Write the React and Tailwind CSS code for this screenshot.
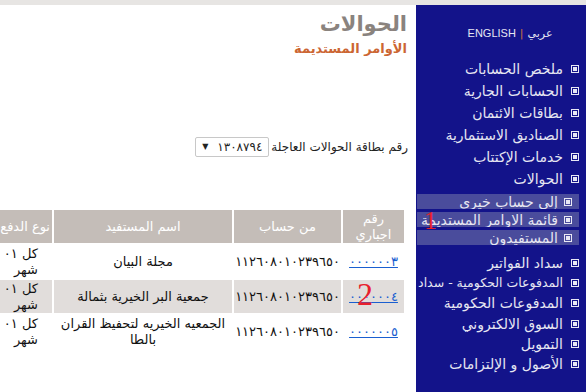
const menuTop = [
  'ملخص الحسابات',
  'الحسابات الجارية',
  'بطاقات الائتمان',
  'الصناديق الاستثمارية',
  'خدمات الإكتتاب',
  'الحوالات',
];

const subMenu = ['إلى حساب خيري', 'قائمة الاوامر المستديمة', 'المستفيدون'];

const menuBottom = [
  { label: 'سداد الفواتير' },
  { label: 'المدفوعات الحكومية - سداد', small: true },
  { label: 'المدفوعات الحكومية' },
  { label: 'السوق الالكتروني' },
  { label: 'التمويل' },
  { label: 'الأصول و الإلتزامات' },
];

const rows = [
  { id: '٠٠٠٠٠٠٣', account: '١١٢٦٠٨٠١٠٢٣٩٦٥٠', name: ['مجلة البيان'], shaded: false },
  { id: '٠٠٠٠٠٠٤', account: '١١٢٦٠٨٠١٠٢٣٩٦٥٠', name: ['جمعية البر الخيرية بثمالة'], shaded: true },
  { id: '٠٠٠٠٠٠٥', account: '١١٢٦٠٨٠١٠٢٣٩٦٥٠', name: ['الجمعيه الخيريه لتحفيظ القران', 'بالطا'], shaded: false },
];

const Bullet = () => (
  <span className="w-[8px] h-[8px] border border-[#e8e8f4] flex items-center justify-center shrink-0">
    <span className="w-[4px] h-[4px] bg-[#e8e8f4]"></span>
  </span>
);

const Sidebar = () => (
  <aside className="w-[170px] shrink-0 bg-[#13138a] text-[#e6e6f2] text-[14px] leading-none">
    <div className="h-[23px]"></div>
    <div className="flex items-center justify-center gap-[4px] text-[11px] pl-[18px]">
      <span>عربي</span>
      <span className="text-[#d0703a]">|</span>
      <span dir="ltr" className="font-['Liberation_Sans']">ENGLISH</span>
    </div>
    <div className="h-[19px]"></div>
    {menuTop.map((item) => (
      <div key={item} className="h-[22px] flex items-center gap-[8px] pr-[7px]">
        <Bullet />
        <span>{item}</span>
      </div>
    ))}
    <div className="h-[4px]"></div>
    <div className="flex flex-col gap-[3px] ml-[1px] mr-[7px]">
      {subMenu.map((item) => (
        <div key={item} className="h-[15px] bg-[#4a4c9c] flex items-center gap-[6px] pr-[7px] whitespace-nowrap overflow-hidden">
          <Bullet />
          <span>{item}</span>
        </div>
      ))}
    </div>
    <div className="h-[8px]"></div>
    {menuBottom.map((item) => (
      <div key={item.label} className="h-[20.2px] flex items-center gap-[8px] pr-[7px] whitespace-nowrap">
        <Bullet />
        <span className={item.small ? 'text-[12.5px]' : ''}>{item.label}</span>
      </div>
    ))}
  </aside>
);

const Content = () => (
  <main className="flex-1 relative overflow-hidden bg-white">
    <div className="pr-[9px] pt-[4px]">
      <h1 className="text-[21px] leading-[31px] font-bold text-[#8a837e]">الحوالات</h1>
      <h2 className="text-[13px] leading-[18px] font-bold text-[#cc6633]">الأوامر المستديمة</h2>
    </div>
    <div className="flex items-center gap-[2px] pr-[8px] mt-[79px] text-[12px] text-[#222]">
      <span>رقم بطاقة الحوالات العاجلة</span>
      <div className="w-[74px] h-[20px] border border-[#c8c8c8] rounded-[2px] flex items-center justify-between px-[6px] bg-white">
        <span className="text-[12px]">١٣٠٨٧٩٤</span>
        <span className="text-[8px]">▼</span>
      </div>
    </div>
    <div className="pr-[10px] mt-[51px]">
      <table className="table-fixed w-[420px] border-separate border-spacing-[2px] text-[13px] leading-[16px] text-[#111]">
        <thead>
          <tr className="bg-[#c4bdb8] text-white h-[33px]">
            <th className="w-[61px] font-normal text-center">رقم<br />اجباري</th>
            <th className="w-[107px] font-normal">من حساب</th>
            <th className="w-[178px] font-normal">اسم المستفيد</th>
            <th className="w-[64px] font-normal whitespace-nowrap text-right pr-[2px]">نوع الدفع</th>
          </tr>
        </thead>
        <tbody>
          {rows.map((r) => (
            <tr key={r.id} className={`h-[33px] ${r.shaded ? 'bg-[#e1dddb]' : 'bg-white'}`}>
              <td className="text-center">
                <span className="text-[#1a5fd0] underline">{r.id}</span>
              </td>
              <td className="text-center">{r.account}</td>
              <td className="text-center whitespace-nowrap">
                {r.name.map((line) => (
                  <div key={line}>{line}</div>
                ))}
              </td>
              <td className="text-right pr-[14px]">كل ٠١<br />شهر</td>
            </tr>
          ))}
        </tbody>
      </table>
    </div>
    <span className="absolute left-[357px] top-[273px] text-[32px] leading-none font-['Liberation_Serif'] text-[#e8202c]">2</span>
  </main>
);

export default function App() {
  return (
    <div dir="rtl" className="w-[586px] h-[392px] overflow-hidden bg-white font-['DejaVu_Sans',sans-serif] relative">
      <div className="h-[5px] bg-[#e7e5e3]"></div>
      <div className="flex h-[387px]">
        <Sidebar />
        <Content />
      </div>
      <span className="absolute left-[424px] top-[208px] text-[26px] leading-none font-['Liberation_Serif'] text-[#e8202c]">1</span>
    </div>
  );
}
